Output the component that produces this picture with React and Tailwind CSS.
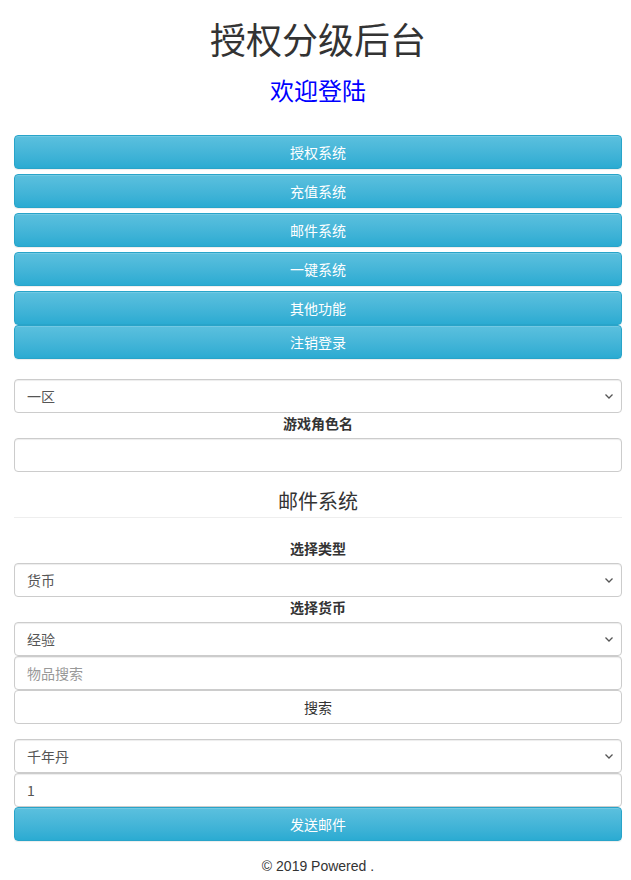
import React, { useState } from 'react';

const font = { fontFamily: '"Microsoft YaHei", "Noto Sans CJK SC", "Liberation Sans", sans-serif' };

const InfoButton = ({ children }) => (
  <button className="w-full h-[34px] rounded-[4px] border border-[#28a4c9] bg-gradient-to-b from-[#5bc0de] to-[#2aabd2] text-white text-sm shadow-[inset_0_1px_0_rgba(255,255,255,0.15),0_1px_1px_rgba(0,0,0,0.075)]">
    {children}
  </button>
);

const Chevron = () => (
  <svg
    className="absolute right-[8px] top-1/2 -translate-y-1/2 pointer-events-none"
    width="10"
    height="10"
    viewBox="0 0 10 10"
    fill="none"
    stroke="#555"
    strokeWidth="1.3"
  >
    <path d="M1.5 3.5 L5 7 L8.5 3.5" />
  </svg>
);

const Select = ({ value, options }) => (
  <div className="relative">
    <select
      defaultValue={value}
      className="w-full h-[34px] appearance-none rounded-[4px] border border-[#ccc] bg-white pl-3 pr-6 text-sm text-[#555] shadow-[inset_0_1px_1px_rgba(0,0,0,0.075)] outline-none"
    >
      {options.map((o) => (
        <option key={o}>{o}</option>
      ))}
    </select>
    <Chevron />
  </div>
);

const Input = ({ placeholder, value }) => (
  <input
    defaultValue={value}
    placeholder={placeholder}
    className="w-full h-[34px] rounded-[4px] border border-[#ccc] bg-white px-3 text-sm text-[#555] placeholder:text-[#999] shadow-[inset_0_1px_1px_rgba(0,0,0,0.075)] outline-none"
  />
);

const Label = ({ children }) => (
  <div className="text-center text-sm font-bold text-[#333] leading-5 mb-[5px]">{children}</div>
);

export default function App() {
  const [menu] = useState(['授权系统', '充值系统', '邮件系统', '一键系统', '其他功能']);

  return (
    <div className="bg-white pl-[14px] pr-[9px] pb-[4px] text-[#333]" style={font}>
      <h1 className="text-center text-[36px] leading-[40px] pt-[18px]">授权分级后台</h1>
      <div className="text-center text-[24px] leading-[27px] text-[#0000ff] mt-[18px]">欢迎登陆</div>

      <div className="mt-[32px] flex flex-col gap-[5px]">
        {menu.map((m) => (
          <InfoButton key={m}>{m}</InfoButton>
        ))}
      </div>
      <InfoButton>注销登录</InfoButton>

      <div className="mt-[20px]">
        <Select value="一区" options={['一区', '二区', '三区']} />
        <Label>游戏角色名</Label>
        <Input />
      </div>

      <div className="mt-[16px] text-center text-[20px] leading-[26px]">邮件系统</div>
      <div className="mt-[3px] border-t border-[#eee]" />

      <div className="mt-[20px]">
        <Label>选择类型</Label>
        <Select value="货币" options={['货币', '物品']} />
        <Label>选择货币</Label>
        <Select value="经验" options={['经验', '金币']} />
        <Input placeholder="物品搜索" />
        <button className="w-full h-[34px] rounded-[4px] border border-[#ccc] bg-white text-sm text-[#333]">
          搜索
        </button>
      </div>

      <div className="mt-[15px]">
        <Select value="千年丹" options={['千年丹']} />
        <Input value="1" />
        <InfoButton>发送邮件</InfoButton>
      </div>

      <div className="mt-[15px] text-center text-sm leading-5" style={{ fontFamily: '"Liberation Sans", Arial, sans-serif' }}>
        © 2019 Powered .
      </div>
    </div>
  );
}
